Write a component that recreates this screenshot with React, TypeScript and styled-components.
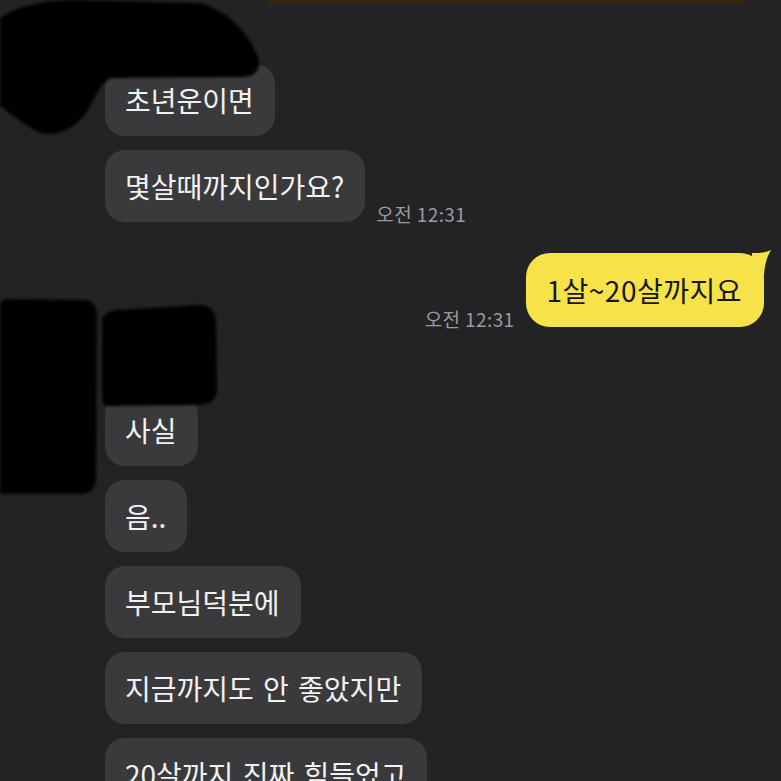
import { FC } from 'react';
import styled, { createGlobalStyle } from 'styled-components';

const GlobalStyle = createGlobalStyle`
  html, body {
    margin: 0;
    padding: 0;
    background: #232325;
  }
  body {
    font-family: 'Noto Sans CJK KR', 'Noto Sans', sans-serif;
  }
`;

const Screen = styled.div`
  position: relative;
  width: 781px;
  height: 781px;
  overflow: hidden;
  background: #232325;
  display: flex;
  flex-direction: column;
  & > * {
    flex-shrink: 0;
  }
`;

const TopEdge = styled.div`
  align-self: flex-end;
  margin-right: 36px;
  width: 477px;
  height: 10px;
  background: linear-gradient(#3a2a06 0, #2d2510 30%, #26252b 45%, #232325 100%);
`;

const Group = styled.div<{ $side: 'left' | 'right'; $top: number }>`
  display: flex;
  flex-direction: column;
  gap: 14px;
  margin-top: ${({ $top }) => $top}px;
  align-items: ${({ $side }) => ($side === 'left' ? 'flex-start' : 'flex-end')};
  padding: ${({ $side }) => ($side === 'left' ? '0 0 0 105px' : '0 17px 0 0')};
`;

const Row = styled.div`
  display: flex;
  align-items: flex-end;
  gap: 11px;
`;

const Bubble = styled.div<{ $mine?: boolean }>`
  position: relative;
  flex-shrink: 0;
  box-sizing: border-box;
  height: ${({ $mine }) => ($mine ? 74 : 72)}px;
  padding: ${({ $mine }) => ($mine ? '0 22px 0 21px' : '0 21px 0 20px')};
  display: flex;
  align-items: center;
  border-radius: ${({ $mine }) => ($mine ? 24 : 20)}px;
  background: ${({ $mine }) => ($mine ? '#f8e24a' : '#3a3a3c')};
  color: ${({ $mine }) => ($mine ? '#161616' : '#f2f2f2')};
  font-size: 28px;
  line-height: 34px;
  white-space: pre;
  word-spacing: 3px;
  letter-spacing: ${({ $mine }) => ($mine ? '0.5px' : '0')};
`;

const Tail = styled.svg`
  position: absolute;
  top: 0;
  right: -8px;
  width: 20px;
  height: 22px;
  overflow: visible;
`;

const Time = styled.span`
  font-size: 19px;
  line-height: 16px;
  color: #9b9b9f;
  white-space: nowrap;
  letter-spacing: 0.4px;
`;

const Redaction = styled.svg`
  position: absolute;
  left: 0;
  top: 0;
  width: 300px;
  height: 520px;
  pointer-events: none;
`;

type Msg = { text: string; time?: string };

const Incoming: FC<{ msg: Msg }> = ({ msg }) => (
  <Row>
    <Bubble>{msg.text}</Bubble>
    {msg.time && <Time>{msg.time}</Time>}
  </Row>
);

const Outgoing: FC<{ msg: Msg }> = ({ msg }) => (
  <Row>
    {msg.time && <Time>{msg.time}</Time>}
    <Bubble $mine>
      {msg.text}
      <Tail viewBox="0 0 20 22">
        <path d="M0 0 L6 0 C10 0 14 -1 19 -3 C15 4 13 10 12 22 L0 22 Z" fill="#f8e24a" />
      </Tail>
    </Bubble>
  </Row>
);

const first: Msg[] = [{ text: '초년운이면' }, { text: '몇살때까지인가요?', time: '오전 12:31' }];
const mine: Msg[] = [{ text: '1살~20살까지요', time: '오전 12:31' }];
const second: Msg[] = [
  { text: '사실' },
  { text: '음..' },
  { text: '부모님덕분에' },
  { text: '지금까지도 안 좋았지만' },
  { text: '20살까지 진짜 힘들었고' },
];

export default function App() {
  return (
    <>
      <GlobalStyle />
      <Screen>
        <TopEdge />
        <Group $side="left" $top={54}>
          {first.map((m) => (
            <Incoming key={m.text} msg={m} />
          ))}
        </Group>
        <Group $side="right" $top={31}>
          {mine.map((m) => (
            <Outgoing key={m.text} msg={m} />
          ))}
        </Group>
        <Group $side="left" $top={67}>
          {second.map((m) => (
            <Incoming key={m.text} msg={m} />
          ))}
        </Group>
        <Redaction viewBox="0 0 300 520">
          <defs>
            <filter id="soft" x="-10%" y="-10%" width="120%" height="120%">
              <feGaussianBlur stdDeviation="1.6" />
            </filter>
          </defs>
          <g fill="#000" filter="url(#soft)">
            <path d="M0 18 C18 6 40 1 70 0 L198 3 C224 8 244 28 256 52 C263 66 258 77 242 77 L112 78 C100 82 96 96 88 110 C78 126 58 138 42 133 C26 127 12 114 0 106 Z" />
            <path d="M0 306 C0 301 4 299 10 299 L84 300 C93 300 97 306 97 316 L96 478 C96 488 90 494 80 494 L0 494 Z" />
            <path d="M102 322 C102 314 108 311 118 310 L198 305 C210 305 216 311 216 322 L217 388 C217 400 210 405 198 405 L108 406 C104 406 102 402 102 396 Z" />
          </g>
        </Redaction>
      </Screen>
    </>
  );
}
